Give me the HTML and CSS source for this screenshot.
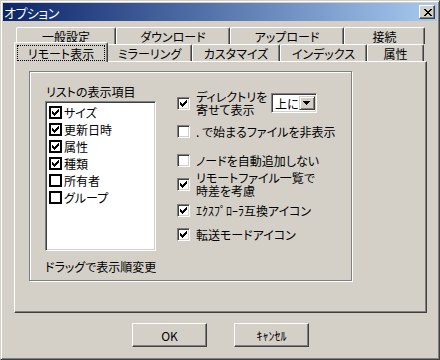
FILE: index.html
```html
<!DOCTYPE html>
<html lang="ja">
<head>
<meta charset="utf-8">
<title>オプション</title>
<link rel="stylesheet" href="styles.css">
</head>
<body>
<div class="window">
  <div class="titlebar">
    <span class="title">オプション</span>
    <span class="close"><svg width="8" height="7" viewBox="0 0 8 7" shape-rendering="crispEdges"><path fill="#000" d="M0 0h2v1H0zM6 0h2v1H6zM1 1h2v1H1zM5 1h2v1H5zM2 2h4v1H2zM3 3h2v1H3zM2 4h4v1H2zM1 5h2v1H1zM5 5h2v1H5zM0 6h2v1H0zM6 6h2v1H6z"/></svg></span>
  </div>
  <div class="main">
    <div class="tabs">
      <div class="tabrow">
        <div class="tab w1">一般設定</div>
        <div class="tab w2">ダウンロード</div>
        <div class="tab w3">アップロード</div>
        <div class="tab w4">接続</div>
      </div>
      <div class="tabrow">
        <div class="tab sel w5"><span class="focus">リモート表示</span></div>
        <div class="tab w6">ミラーリング</div>
        <div class="tab w7">カスタマイズ</div>
        <div class="tab w8">インデックス</div>
        <div class="tab w9">属性</div>
      </div>
    </div>
    <div class="panel">
      <div class="group">
        <div class="leftcol">
          <div class="label">リストの表示項目</div>
          <div class="listbox">
            <div class="item"><span class="lcb"><svg class="chk" width="7" height="7" viewBox="0 0 7 7" shape-rendering="crispEdges"><path fill="#000" d="M0 2h1v3H0zM1 3h1v3H1zM2 4h1v3H2zM3 3h1v3H3zM4 2h1v3H4zM5 1h1v3H5zM6 0h1v3H6z"/></svg></span>サイズ</div>
            <div class="item"><span class="lcb"><svg class="chk" width="7" height="7" viewBox="0 0 7 7" shape-rendering="crispEdges"><path fill="#000" d="M0 2h1v3H0zM1 3h1v3H1zM2 4h1v3H2zM3 3h1v3H3zM4 2h1v3H4zM5 1h1v3H5zM6 0h1v3H6z"/></svg></span>更新日時</div>
            <div class="item"><span class="lcb"><svg class="chk" width="7" height="7" viewBox="0 0 7 7" shape-rendering="crispEdges"><path fill="#000" d="M0 2h1v3H0zM1 3h1v3H1zM2 4h1v3H2zM3 3h1v3H3zM4 2h1v3H4zM5 1h1v3H5zM6 0h1v3H6z"/></svg></span>属性</div>
            <div class="item"><span class="lcb"><svg class="chk" width="7" height="7" viewBox="0 0 7 7" shape-rendering="crispEdges"><path fill="#000" d="M0 2h1v3H0zM1 3h1v3H1zM2 4h1v3H2zM3 3h1v3H3zM4 2h1v3H4zM5 1h1v3H5zM6 0h1v3H6z"/></svg></span>種類</div>
            <div class="item"><span class="lcb"></span>所有者</div>
            <div class="item"><span class="lcb"></span>グループ</div>
          </div>
          <div class="hint">ドラッグで表示順変更</div>
        </div>
        <div class="rightcol">
          <div class="opt r1">
            <span class="cb"><svg class="chk" width="7" height="7" viewBox="0 0 7 7" shape-rendering="crispEdges"><path fill="#000" d="M0 2h1v3H0zM1 3h1v3H1zM2 4h1v3H2zM3 3h1v3H3zM4 2h1v3H4zM5 1h1v3H5zM6 0h1v3H6z"/></svg></span>
            <span class="txt two fixed"><span class="ln">ディレクトリを</span><span class="ln">寄せて表示</span></span>
            <span class="combo"><span class="combotext">上に</span><span class="dropbtn"><svg width="7" height="4" viewBox="0 0 7 4" shape-rendering="crispEdges"><path fill="#000" d="M0 0h7v1H0zM1 1h5v1H1zM2 2h3v1H2zM3 3h1v1H3z"/></svg></span></span>
          </div>
          <div class="opt r2"><span class="cb"></span><span class="txt">. で始まるファイルを非表示</span></div>
          <div class="opt r3"><span class="cb"></span><span class="txt">ノードを自動追加しない</span></div>
          <div class="opt r4"><span class="cb"><svg class="chk" width="7" height="7" viewBox="0 0 7 7" shape-rendering="crispEdges"><path fill="#000" d="M0 2h1v3H0zM1 3h1v3H1zM2 4h1v3H2zM3 3h1v3H3zM4 2h1v3H4zM5 1h1v3H5zM6 0h1v3H6z"/></svg></span><span class="txt two"><span class="ln">リモートファイル一覧で</span><span class="ln">時差を考慮</span></span></div>
          <div class="opt r5"><span class="cb"><svg class="chk" width="7" height="7" viewBox="0 0 7 7" shape-rendering="crispEdges"><path fill="#000" d="M0 2h1v3H0zM1 3h1v3H1zM2 4h1v3H2zM3 3h1v3H3zM4 2h1v3H4zM5 1h1v3H5zM6 0h1v3H6z"/></svg></span><span class="txt">ｴｸｽﾌﾟﾛｰﾗ互換アイコン</span></div>
          <div class="opt r6"><span class="cb"><svg class="chk" width="7" height="7" viewBox="0 0 7 7" shape-rendering="crispEdges"><path fill="#000" d="M0 2h1v3H0zM1 3h1v3H1zM2 4h1v3H2zM3 3h1v3H3zM4 2h1v3H4zM5 1h1v3H5zM6 0h1v3H6z"/></svg></span><span class="txt">転送モードアイコン</span></div>
        </div>
      </div>
    </div>
    <div class="buttons">
      <div class="btn">OK</div>
      <div class="btn">ｷｬﾝｾﾙ</div>
    </div>
  </div>
</div>
</body>
</html>
```

FILE: styles.css
```css
* { box-sizing: border-box; margin: 0; padding: 0; }
html, body { width: 440px; height: 360px; overflow: hidden; }
body {
  background: #d4d0c8;
  font-family: "Noto Sans CJK JP", "Noto Sans", sans-serif;
  font-size: 12px;
  line-height: 13px;
  color: #000;
  font-feature-settings: "palt";
  white-space: nowrap;
}
.window {
  width: 440px;
  height: 360px;
  border: 1px solid;
  border-color: #d4d0c8 #404040 #404040 #d4d0c8;
  box-shadow: inset 1px 1px #fff, inset -1px -1px #808080;
  padding: 2px;
  display: flex;
  flex-direction: column;
}
.titlebar {
  height: 18px;
  flex: none;
  background: linear-gradient(to right, #0a246a, #a6caf0);
  display: flex;
  align-items: center;
  justify-content: space-between;
  padding: 0 2px 0 1px;
  color: #fff;
}
.title { font-size: 13px; letter-spacing: -0.5px; }
.close {
  width: 16px;
  height: 14px;
  background: #d4d0c8;
  border: 1px solid;
  border-color: #fff #404040 #404040 #fff;
  box-shadow: inset -1px -1px #808080;
  display: flex;
  align-items: center;
  justify-content: center;
  padding-left: 1px;
}
.close svg { display: block; }
.main {
  padding: 6px 0 0 11px;
}
.tabs { width: 413px; }
.tabrow {
  display: flex;
  align-items: flex-end;
  height: 17px;
  padding-left: 2px;
}
.tab {
  height: 17px;
  border: 1px solid;
  border-color: #fff #404040 transparent #fff;
  border-bottom: none;
  box-shadow: inset -1px 0 #808080;
  border-radius: 2px 2px 0 0;
  display: flex;
  align-items: center;
  justify-content: center;
  padding-top: 1px;
  background: #d4d0c8;
  flex: none;
}
.w1 { width: 100px; }
.w2 { width: 114px; }
.w3 { width: 114px; }
.w4 { width: 81px; }
.w5 { width: 92px; }
.w6 { width: 85px; }
.w7 { width: 88px; }
.w8 { width: 87px; }
.w9 { width: 57px; }
.tab.sel {
  width: 94px;
  height: 20px;
  margin: 0 -1px -1px -2px;
  z-index: 2;
  padding: 1px;
  align-items: stretch;
}
.focus {
  flex: 1;
  outline: 1px dotted #000;
  outline-offset: -1px;
  display: flex;
  align-items: center;
  justify-content: center;
  margin: 1px 1px 0 1px;
}
.panel {
  width: 413px;
  height: 252px;
  border: 1px solid;
  border-color: #fff #404040 #404040 #fff;
  box-shadow: inset -1px -1px #808080;
  padding: 9px 0 0 14px;
}
.group {
  width: 323px;
  height: 210px;
  border: 1px solid #808080;
  box-shadow: inset 1px 1px #fff, 1px 1px #fff;
  padding: 13px 0 0 15px;
  display: flex;
}
.leftcol { width: 111px; flex: none; }
.label { height: 14px; padding-left: 1px; line-height: 14px; }
.listbox {
  margin-top: 2px;
  height: 150px;
  background: #fff;
  border: 1px solid;
  border-color: #808080 #fff #fff #808080;
  box-shadow: inset 1px 1px #404040, inset -1px -1px #d4d0c8;
  padding: 2px 0 0 3px;
}
.item {
  height: 17px;
  display: flex;
  align-items: center;
  gap: 2px;
}
.lcb {
  width: 13px;
  height: 13px;
  border: 2px solid #000;
  background: #fff;
  flex: none;
  display: flex;
  padding: 1px 0 0 1px;
}
.chk { display: block; }
.hint { margin-top: 9px; line-height: 14px; }
.rightcol { margin: 5px 0 0 21px; }
.opt {
  display: flex;
  align-items: center;
  height: 14px;
}
.opt.r1, .opt.r4 { height: 26px; }
.r2 { margin-top: 8px; }
.r3 { margin-top: 15px; }
.r4 { margin-top: 4px; }
.r5 { margin-top: 6px; }
.r6 { margin-top: 10px; }
.cb {
  width: 13px;
  height: 13px;
  flex: none;
  background: #fff;
  border: 1px solid;
  border-color: #808080 #fff #fff #808080;
  box-shadow: inset 1px 1px #404040, inset -1px -1px #d4d0c8;
  padding: 2px 0 0 2px;
  margin-right: 6px;
}
.txt.two { display: flex; flex-direction: column; }
.ln { height: 13px; line-height: 13px; overflow: visible; }
.txt.fixed { width: 75px; }
.combo {
  width: 46px;
  height: 20px;
  background: #fff;
  border: 1px solid;
  border-color: #808080 #fff #fff #808080;
  box-shadow: inset 1px 1px #404040, inset -1px -1px #d4d0c8;
  padding: 2px;
  display: flex;
}
.combotext { flex: 1; display: flex; align-items: center; padding-left: 1px; }
.dropbtn {
  width: 16px;
  flex: none;
  background: #d4d0c8;
  border: 1px solid;
  border-color: #d4d0c8 #404040 #404040 #d4d0c8;
  box-shadow: inset 1px 1px #fff, inset -1px -1px #808080;
  display: flex;
  align-items: center;
  justify-content: center;
}
.buttons {
  display: flex;
  justify-content: center;
  gap: 27px;
  margin-top: 10px;
  width: 413px;
}
.btn {
  width: 75px;
  height: 24px;
  border: 1px solid;
  border-color: #fff #404040 #404040 #fff;
  box-shadow: inset -1px -1px #808080;
  display: flex;
  align-items: center;
  justify-content: center;
}
```
